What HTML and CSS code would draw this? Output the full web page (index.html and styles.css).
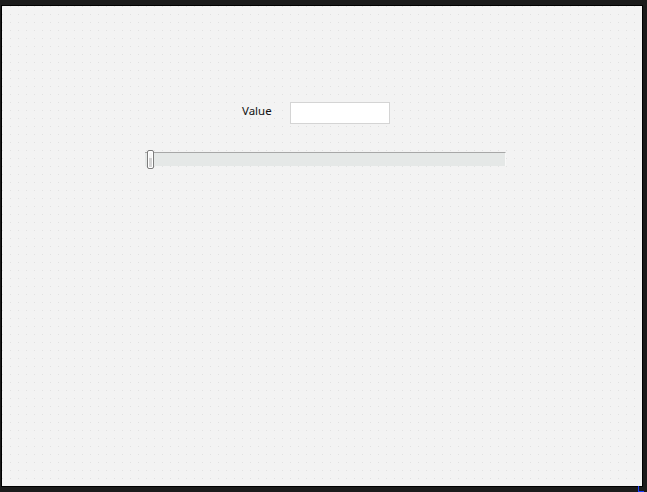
FILE: index.html
```html
<!DOCTYPE html>
<html>
<head>
<meta charset="utf-8">
<link rel="stylesheet" href="styles.css">
</head>
<body>
<div class="window">
  <div class="panel">
    <div class="field-row">
      <span class="label">Value</span>
      <div class="textbox"></div>
    </div>
    <div class="slider">
      <div class="track"></div>
      <div class="thumb"></div>
    </div>
  </div>
  <div class="grip"></div>
</div>
</body>
</html>
```
FILE: styles.css
```css
html, body {
  margin: 0;
  padding: 0;
  background: #1b1b1b;
  width: 647px;
  height: 492px;
  overflow: hidden;
}
.window {
  position: relative;
  margin: 5px 4px 0 1px;
  width: 640px;
  height: 480px;
  border: 1px solid #000;
}
.panel {
  width: 640px;
  height: 480px;
  box-sizing: border-box;
  background-color: #f3f3f3;
  background-image: conic-gradient(from 0deg at 1px 1px, transparent 75%, #e1e1e1 75%);
  background-size: 8px 8px;
  background-position: 0 0;
  padding-top: 96px;
  font-family: "Noto Sans", "Open Sans", sans-serif;
  font-size: 11.5px;
  color: #111;
}
.field-row {
  display: flex;
  align-items: center;
  padding-left: 240px;
  height: 22px;
}
.label {
  width: 48px;
  line-height: 16px;
  margin-top: -4px;
}
.textbox {
  width: 98px;
  height: 20px;
  background: #fff;
  border: 1px solid #d4d4d4;
}
.slider {
  position: relative;
  margin: 26px 0 0 143px;
  width: 362px;
  height: 20px;
}
.track {
  position: absolute;
  left: 0;
  top: 2px;
  width: 360px;
  height: 13px;
  background: #e5e8e7;
  border-top: 1px solid #a7a7a7;
  border-right: 1px solid #f8f8f8;
}
.thumb {
  position: absolute;
  left: 2px;
  top: 0;
  width: 5px;
  height: 17px;
  border: 1px solid #7c7c7c;
  border-radius: 2px;
  background: linear-gradient(#fbfbfb 0%, #f3f3f3 40%, #d2d2d2 41%, #d6d6d6 100%);
  box-shadow: inset 0 0 0 1px #fff;
}
.grip {
  position: absolute;
  right: -2px;
  bottom: -7px;
  width: 5px;
  height: 5px;
  border-left: 1px solid #1a3cff;
  border-bottom: 2px solid #1a3cff;
}
```
